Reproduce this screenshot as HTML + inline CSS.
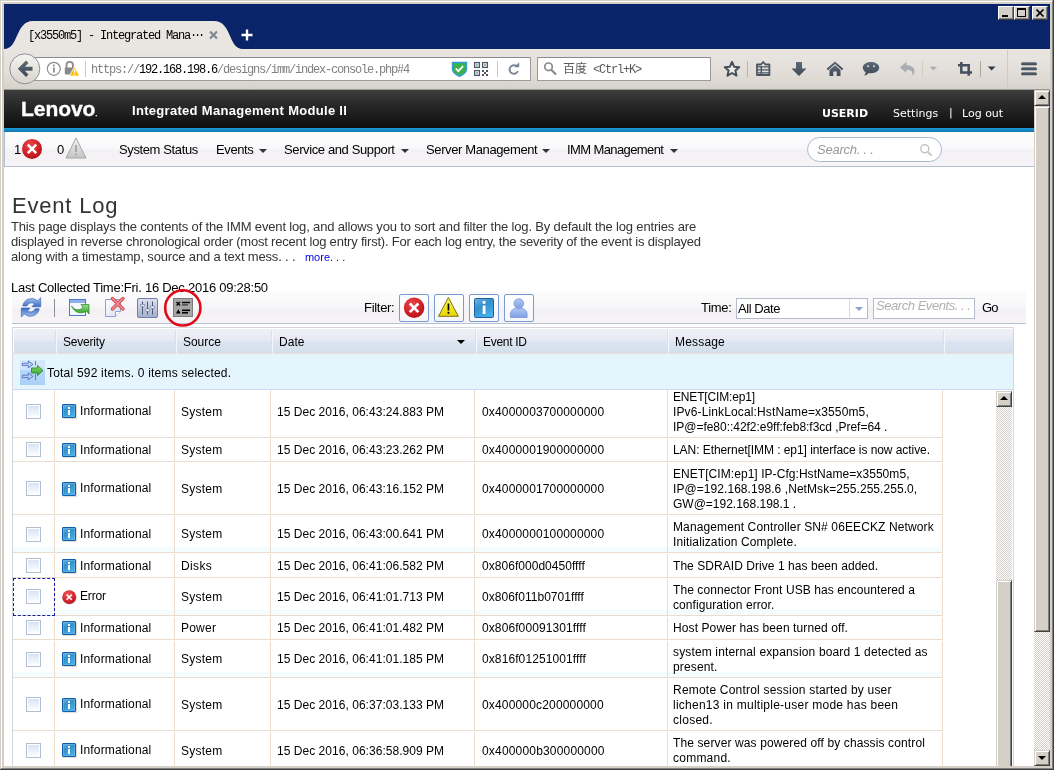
<!DOCTYPE html>
<html><head><meta charset="utf-8"><title>[x3550m5] - Integrated Management Module II</title>
<style>
*{box-sizing:border-box;margin:0;padding:0}
html,body{width:1054px;height:770px;overflow:hidden;background:#d4d0c8}
body{position:relative;font-family:"Liberation Sans",sans-serif;font-size:12px;color:#000}
.abs{position:absolute}
/* window frame */
#frame-w1{left:1px;top:1px;width:1052px;height:768px;border:1px solid #fff;border-right-color:#808080;border-bottom-color:#808080}
#frame-out{left:0;top:0;width:1054px;height:770px;border:1px solid #d4d0c8;border-right-color:#404040;border-bottom-color:#404040}
#title{left:4px;top:4px;width:1046px;height:45px;background:#0a246a}
.wbtn{top:6px;width:16px;height:14px;background:#d4d0c8;border:1px solid #fff;border-right-color:#404040;border-bottom-color:#404040;box-shadow:inset -1px -1px 0 #808080}
#toolbar{left:4px;top:49px;width:1046px;height:40px;background:linear-gradient(#e9e6e2 0%,#e5e1dd 35%,#e2ddd8 60%,#d7d3cc 100%)}
.mono{font-family:"Liberation Mono","Noto Sans CJK SC",monospace;font-size:12px;letter-spacing:-1.2px;white-space:nowrap}
#urlbar{left:32px;top:57px;width:499px;height:24px;background:#fff;border:1px solid #9a9a9a;border-top-color:#8a8a8a}
#searchbar{left:537px;top:57px;width:174px;height:24px;background:#fff;border:1px solid #9a9a9a;border-top-color:#8a8a8a}
/* page */
#page{left:4px;top:89px;width:1030px;height:677px;background:#fff;overflow:hidden;border-top:0}
#hdr{left:0;top:1px;width:1030px;height:38px;background:linear-gradient(#3d3d3d 0%,#262626 45%,#0e0e0e 100%)}
#blue{left:0;top:39px;width:1030px;height:4px;background:linear-gradient(#1d9bdb,#1374ab)}
#nav{left:0;top:43px;width:1030px;height:35px;background:linear-gradient(#fdfcfd 0%,#f9f8fa 45%,#f3f1f4 55%,#f6f4f7 100%);border:1px solid #b4c0d0;border-top:none;border-right:none}
.tah{font-family:"Liberation Sans",sans-serif;font-size:13px;letter-spacing:-0.38px;white-space:nowrap}
.arr{width:0;height:0;border-left:4px solid transparent;border-right:4px solid transparent;border-top:4px solid #333}
.gt{font:12px/15px "Liberation Sans",sans-serif;white-space:nowrap;color:#000}
.ghead{background:linear-gradient(#f0f1f7 0%,#e6e8f3 46%,#dce6f1 50%,#d2deeb 100%)}
.row{left:0;width:930px;border-bottom:1px solid #ecdccc}
.vs{width:1px;background:#ecdccc}
.cb{width:15px;height:15px;border:1px solid #b3bece;background:linear-gradient(#d5e2f3 0%,#eef4fb 60%,#fff 100%);box-shadow:inset 0 0 0 1px #fff}
.sbtrack{background-color:#fff;background-image:linear-gradient(45deg,#d4d0c8 25%,transparent 25%,transparent 75%,#d4d0c8 75%),linear-gradient(45deg,#d4d0c8 25%,transparent 25%,transparent 75%,#d4d0c8 75%);background-size:2px 2px;background-position:0 0,1px 1px}
.sbbtn{background:#d4d0c8;border:1px solid #d4d0c8;border-right-color:#404040;border-bottom-color:#404040;box-shadow:inset 1px 1px 0 #fff,inset -1px -1px 0 #808080}
.fbtn{top:1px;width:30px;height:28px;border:1px solid #7b9bd3;border-radius:2px;background:linear-gradient(#fff,#f6f5f9)}
.gt,.tah,.mono,#hdr div,#evt{will-change:transform}
</style></head><body>
<svg width="0" height="0" style="position:absolute"><defs>
<linearGradient id="ginfo" x1="0" y1="0" x2="0.600" y2="1"><stop offset="0" stop-color="#79b6dc"/><stop offset="0.450" stop-color="#3391cb"/><stop offset="1" stop-color="#46aee8"/></linearGradient>
<linearGradient id="ggrn2" x1="0" y1="0" x2="0" y2="1"><stop offset="0" stop-color="#8fdc78"/><stop offset="1" stop-color="#2f9e2a"/></linearGradient>
<radialGradient id="gerr2" cx="0.4" cy="0.3" r="0.8"><stop offset="0" stop-color="#ee5a5e"/><stop offset="0.6" stop-color="#d3252b"/><stop offset="1" stop-color="#b01218"/></radialGradient>
</defs></svg>
<div class="abs" style="left:1px;top:1px;width:1051px;height:1px;background:#fff"></div>
<div class="abs" style="left:1px;top:1px;width:1px;height:767px;background:#fff"></div>
<div class="abs" style="left:1052px;top:1px;width:1px;height:768px;background:#808080"></div>
<div class="abs" style="left:1px;top:768px;width:1052px;height:1px;background:#808080"></div>
<div class="abs" style="left:1053px;top:0;width:1px;height:770px;background:#404040"></div>
<div class="abs" style="left:0;top:769px;width:1054px;height:1px;background:#404040"></div>
<div class="abs" id="title"></div>
<div class="abs" id="toolbar"></div>
<div class="abs" id="urlbar"></div>
<div class="abs" id="searchbar"></div>

<svg class="abs" id="chrome" style="left:0;top:0" width="1054" height="90" viewBox="0 0 1054 90">
  <defs>
    <linearGradient id="gback" x1="0" y1="0" x2="0" y2="1"><stop offset="0" stop-color="#f6f4f1"/><stop offset="1" stop-color="#d9d5cd"/></linearGradient>
    <linearGradient id="gic" x1="0" y1="0" x2="0" y2="1"><stop offset="0" stop-color="#5c6977"/><stop offset="1" stop-color="#3f4a57"/></linearGradient>
  </defs>
  <!-- tab -->
  <path d="M4,49 C19,49 15,21 33,21 L214,21 C232,21 228,49 243,49 Z" fill="#e9e6e2"/>
  <!-- tab close -->
  <path d="M210,31.5 l7,7 M217,31.5 l-7,7" stroke="#7f8790" stroke-width="2.2" fill="none"/>
  <!-- new tab plus -->
  <path d="M241.5,35 h11 M247,29.5 v11" stroke="#fff" stroke-width="2.4" fill="none"/>
  <!-- back button -->
  <circle cx="24.8" cy="68.8" r="15" fill="url(#gback)" stroke="#8b9097" stroke-width="1"/>
  <path d="M32.5,66.800 H24.800 L28.500,63.100 L26,60.600 L17.800,68.800 L26,77 L28.500,74.500 L24.800,70.800 H32.500 Z" fill="url(#gic)"/>
  <!-- info -->
  <circle cx="53.8" cy="68.8" r="6.5" fill="none" stroke="#8c8c8c" stroke-width="1.2"/>
  <rect x="53" y="67.5" width="1.8" height="5" fill="#8c8c8c"/><rect x="53" y="64.6" width="1.8" height="1.8" fill="#8c8c8c"/>
  <!-- lock -->
  <path d="M66.5,68 v-3 a3.2,3.2 0 0 1 6.4,0 v3" fill="none" stroke="#8a8a8a" stroke-width="1.8"/>
  <rect x="64.8" y="67.5" width="9.6" height="7" rx="1" fill="#8a8a8a"/>
  <path d="M74.5,66.5 L79.6,76 H69.4 Z" fill="#ffbf00" stroke="#fff" stroke-width="0.8"/>
  <rect x="74" y="69.5" width="1.2" height="3.2" fill="#fff"/><rect x="74" y="73.6" width="1.2" height="1.2" fill="#fff"/>
  <!-- url sep -->
  <rect x="85" y="61" width="1" height="16" fill="#c9c9c9"/>
  <!-- shield -->
  <path d="M452.500,62.500 h14 v6.500 c0,3.500 -4,6 -7,7.300 c-3,-1.300 -7,-3.800 -7,-7.300 z" fill="#3cb34a" stroke="#2f9bd8" stroke-width="1.4"/>
  <path d="M455.8,68.500 l2.500,2.700 l4.800,-5" fill="none" stroke="#fff" stroke-width="1.800"/>
  <!-- qr -->
  <g fill="none" stroke="#4c5866" stroke-width="1.300">
    <rect x="474.6" y="62.6" width="4.800" height="4.800"/><rect x="482.6" y="62.6" width="4.800" height="4.800"/><rect x="474.6" y="70.6" width="4.800" height="4.800"/>
  </g>
  <g fill="#4c5866"><rect x="476.300" y="64.300" width="1.400" height="1.400"/><rect x="484.300" y="64.300" width="1.400" height="1.400"/><rect x="476.300" y="72.300" width="1.400" height="1.400"/>
    <rect x="482" y="70" width="2" height="2"/><rect x="486" y="70" width="2" height="2"/><rect x="484" y="72" width="2" height="2"/><rect x="482" y="74" width="2" height="2"/><rect x="486" y="74" width="2" height="2"/></g>
  <rect x="497" y="61" width="1" height="16" fill="#c9c9c9"/>
  <!-- reload -->
  <path d="M516.800,66.300 a4.300,4.300 0 1 0 1.100,4.700" fill="none" stroke="#7b8693" stroke-width="1.900"/>
  <path d="M514.200,67.300 h5 v-5 z" fill="#7b8693"/>
  <!-- search magnifier -->
  <circle cx="548.500" cy="66.800" r="3.800" fill="none" stroke="#8a8a8a" stroke-width="1.700"/>
  <path d="M551.300,69.800 l4.700,4.700" stroke="#8a8a8a" stroke-width="2.200" fill="none"/>
  <!-- star -->
  <path d="M732,62 l2.100,4.700 l5.100,0.500 l-3.800,3.400 l1.100,5 l-4.500,-2.600 l-4.500,2.600 l1.100,-5 l-3.800,-3.400 l5.100,-0.500 z" fill="#eeebe7" stroke="#414d5a" stroke-width="2" stroke-linejoin="round"/>
  <rect x="747" y="61" width="1" height="16" fill="#b9b6b0"/>
  <!-- clipboard -->
  <path d="M757,64.500 h4 l2.200,-2.500 l2.200,2.500 h4 v10.500 h-12.400 z" fill="none" stroke="#4a5663" stroke-width="1.800" stroke-linejoin="round"/>
  <path d="M758,66.900 h11 M758,69.900 h11 M758,72.900 h11 M761.300,66 v8.500" stroke="#4a5663" stroke-width="1.400" fill="none"/>
  <!-- download -->
  <path d="M796,62 h6 v6.500 h4.500 l-7.500,7.500 l-7.500,-7.500 h4.500 z" fill="url(#gic)"/>
  <!-- home -->
  <path d="M835,61.500 l8.300,7.300 l-1.300,1.400 l-7,-6.200 l-7,6.200 l-1.300,-1.400 z" fill="url(#gic)"/>
  <path d="M829.500,70 l5.500,-4.800 l5.500,4.800 v6 h-3.800 v-4.500 h-3.400 v4.500 h-3.800 z" fill="url(#gic)"/>
  <!-- chat -->
  <path d="M871,62 c5,0 8.200,2.500 8.200,5.600 c0,3.100 -3.200,5.600 -8.200,5.600 c-0.800,0 -1.600,-0.100 -2.300,-0.200 c-1.200,1.400 -2.700,2.200 -4.500,2.400 c0.900,-0.900 1.400,-2 1.400,-3.300 c-1.800,-1 -2.800,-2.600 -2.800,-4.500 c0,-3.100 3.200,-5.600 8.200,-5.600 z" fill="url(#gic)"/>
  <circle cx="868" cy="66.300" r="1" fill="#d9dde2"/><circle cx="874" cy="66.300" r="1" fill="#d9dde2"/>
  <!-- undo (disabled) -->
  <path d="M906.500,61.800 v3.400 c5,0 8,2.500 8,6 c0,2 -1,3.600 -2.800,4.600 c0.600,-0.900 0.800,-1.700 0.800,-2.600 c0,-2.200 -2,-3.500 -6,-3.500 v3.400 l-6.500,-5.600 z" fill="#a9adb1"/>
  <rect x="922" y="61" width="1" height="16" fill="#d2cec7"/>
  <path d="M929.700,66.800 h7.400 l-3.700,3.600 z" fill="#a9adb1"/>
  <!-- crop -->
  <path d="M961.300,62 v10.500 h10.700 M958,65.300 h10.700 v10.500" fill="none" stroke="#445060" stroke-width="2.500"/>
  <rect x="980" y="61" width="1" height="16" fill="#a9a6a0"/>
  <path d="M987.700,66.600 h7.800 l-3.900,3.900 z" fill="#2f3a47"/>
  <rect x="1007" y="50" width="1" height="38" fill="#cfcbc4"/>
  <!-- hamburger -->
  <g fill="url(#gic)"><rect x="1021" y="62.200" width="16" height="3" rx="1.500"/><rect x="1021" y="67.200" width="16" height="3" rx="1.500"/><rect x="1021" y="72.200" width="16" height="3" rx="1.500"/></g>
</svg>
<div class="abs wbtn" style="left:998px"><div class="abs" style="left:3px;top:8px;width:6px;height:2px;background:#000"></div></div>
<div class="abs wbtn" style="left:1014px"><div class="abs" style="left:2px;top:1px;width:9px;height:9px;border:1px solid #000;border-top-width:2px"></div></div>
<div class="abs wbtn" style="left:1032px"><svg class="abs" style="left:3px;top:2px" width="9" height="8" viewBox="0 0 9 8"><path d="M0.500,0.500 L7.500,7.500 M7.500,0.500 L0.500,7.500" stroke="#000" stroke-width="1.600"/></svg></div>
<div class="abs mono" style="left:28px;top:29px;color:#000;line-height:14px">[x3550m5] - Integrated Mana<span style="letter-spacing:-3.200px">···</span></div>
<div class="abs mono" style="left:90.500px;top:63px;line-height:14px;color:#808080">https://<span style="color:#000">192.168.198.6</span>/designs/imm/index-console.php#4</div>
<div class="abs mono" style="left:563px;top:63px;line-height:14px;color:#5a5a5a"><span style="letter-spacing:0">百度</span> &lt;Ctrl+K&gt;</div>
<div class="abs" id="page">
  <div class="abs" id="hdr">
    <div class="abs" style="left:17px;top:7px;font:bold 21px/24px 'Liberation Sans',sans-serif;letter-spacing:-0.050px;-webkit-text-stroke:0.350px #fff;color:#fff">Lenovo<span style="font-size:6px;letter-spacing:0">.</span></div>
    <div class="abs" style="left:128px;top:13px;font:bold 13px/16px 'Liberation Sans',sans-serif;letter-spacing:0.3px;color:#fff;white-space:nowrap">Integrated Management Module II</div>
    <div class="abs" style="left:818px;top:17px;font:bold 11px/14px 'DejaVu Sans',sans-serif;color:#fff">USERID</div>
    <div class="abs" style="left:889px;top:17px;font:11px/14px 'DejaVu Sans',sans-serif;color:#fff;white-space:nowrap">Settings</div>
    <div class="abs" style="left:945px;top:16px;font:11px/14px 'DejaVu Sans',sans-serif;color:#fff">|</div>
    <div class="abs" style="left:958px;top:17px;font:11px/14px 'DejaVu Sans',sans-serif;color:#fff;white-space:nowrap">Log out</div>
  </div>
  <div class="abs" id="blue"></div>
  <div class="abs" id="nav">
    <div class="abs tah" style="left:9px;top:10px;line-height:16px">1</div>
    <svg class="abs" style="left:15px;top:4px" width="24" height="24" viewBox="0 0 24 24">
      <defs><radialGradient id="gerr" cx="0.4" cy="0.3" r="0.8"><stop offset="0" stop-color="#e8474b"/><stop offset="0.6" stop-color="#d11f25"/><stop offset="1" stop-color="#a80d12"/></radialGradient></defs>
      <circle cx="12" cy="12.900" r="10" fill="url(#gerr)"/>
      <path d="M7.800,8.700 l8.400,8.400 M16.200,8.700 l-8.400,8.400" stroke="#fff" stroke-width="2.600" fill="none"/>
    </svg>
    <div class="abs tah" style="left:52px;top:10px;line-height:16px">0</div>
    <svg class="abs" style="left:59px;top:4px" width="24" height="24" viewBox="0 0 24 24">
      <defs><linearGradient id="gwarn" x1="0" y1="0" x2="0" y2="1"><stop offset="0" stop-color="#f4f4f4"/><stop offset="1" stop-color="#c4c4c4"/></linearGradient></defs>
      <path d="M12,2 L22,22 H2 Z" fill="url(#gwarn)" stroke="#a4a4a4" stroke-width="1" stroke-linejoin="round"/>
      <rect x="11.200" y="9" width="1.600" height="7" fill="#9c9c9c"/><rect x="11.200" y="17.500" width="1.600" height="1.800" fill="#9c9c9c"/>
    </svg>
    <div class="abs tah" style="left:114px;top:10px;line-height:16px">System Status</div>
    <div class="abs tah" style="left:211px;top:10px;line-height:16px">Events</div>
    <div class="abs arr" style="left:254px;top:17px"></div>
    <div class="abs tah" style="left:279px;top:10px;line-height:16px">Service and Support</div>
    <div class="abs arr" style="left:396px;top:17px"></div>
    <div class="abs tah" style="left:421px;top:10px;line-height:16px">Server Management</div>
    <div class="abs arr" style="left:537px;top:17px"></div>
    <div class="abs tah" style="left:562px;top:10px;line-height:16px;letter-spacing:-0.600px">IMM Management</div>
    <div class="abs arr" style="left:665px;top:17px"></div>
    <div class="abs" style="left:802px;top:5px;width:135px;height:25px;border:1px solid #a9b9d1;border-radius:13px;background:#fff"></div>
    <div class="abs tah" style="left:812px;top:10px;line-height:16px;font-style:italic;color:#999;letter-spacing:-0.250px">Search. . .</div>
    <svg class="abs" style="left:914px;top:11px" width="14" height="14" viewBox="0 0 14 14"><circle cx="5.800" cy="5.800" r="4" fill="none" stroke="#c4c4c4" stroke-width="1.500"/><path d="M8.800,8.800 l3.800,3.800" stroke="#c4c4c4" stroke-width="1.800"/></svg>
  </div>

  <div class="abs" id="evt" style="left:8px;top:103px;font:22px/28px 'Liberation Sans',sans-serif;letter-spacing:0.800px;color:#333;white-space:nowrap">Event Log</div>
  <div class="abs tah" style="left:7px;top:130px;line-height:15px;letter-spacing:-0.160px;color:#333">This page displays the contents of the IMM event log, and allows you to sort and filter the log. By default the log entries are</div>
  <div class="abs tah" style="left:7px;top:145px;line-height:15px;letter-spacing:-0.200px;color:#333">displayed in reverse chronological order (most recent log entry first). For each log entry, the severity of the event is displayed</div>
  <div class="abs tah" style="left:7px;top:160px;line-height:15px;letter-spacing:-0.160px;color:#333">along with a timestamp, source and a text mess. . . <span style="font-size:11px;color:#0000ee;margin-left:6px;letter-spacing:0">more. . .</span></div>
  <div class="abs tah" style="left:7px;top:191px;line-height:16px;letter-spacing:-0.250px;color:#000">Last Collected Time:Fri, 16 Dec 2016 09:28:50</div>
  <div class="abs" id="tb" style="left:8px;top:203px;width:1014px;height:32px;background:linear-gradient(#fdfcfd 0%,#f8f7f9 40%,#f3f1f4 60%,#f6f4f7 100%);border-bottom:1px solid #b6c2d2"></div>
  <div class="abs" id="tbicons" style="left:8px;top:204px;width:1014px;height:30px">
<svg class="abs" style="left:0;top:-8px" width="300" height="46" viewBox="8 -8 300 46">
  <defs>
    <linearGradient id="gref" x1="0" y1="0" x2="0" y2="1"><stop offset="0" stop-color="#a4c6f2"/><stop offset="1" stop-color="#3a6cc0"/></linearGradient>
    <linearGradient id="ggrn" x1="0" y1="0" x2="0" y2="1"><stop offset="0" stop-color="#9be08a"/><stop offset="1" stop-color="#2f9e2a"/></linearGradient>
    <linearGradient id="gset" x1="0" y1="0" x2="0" y2="1"><stop offset="0" stop-color="#dde2f0"/><stop offset="1" stop-color="#a3afcd"/></linearGradient>
    <linearGradient id="gpg" x1="0" y1="0" x2="1" y2="1"><stop offset="0" stop-color="#ffffff"/><stop offset="1" stop-color="#d4def4"/></linearGradient>
  </defs>
  <!-- coordinates here are page-absolute minus (4,89+204=293): x_abs-4, y_abs-293 -->
  <!-- refresh: abs x 21..41, y 297..317 => local x 17..37, y 4..24 -->
  <path d="M18.800,13 A8.900,8.900 0 0 1 33.500,7.700 L36.700,4.800 V13.800 H27.800 L30.500,11 A4.800,4.800 0 0 0 22.900,13 Z" fill="url(#gref)" stroke="#2d5cac" stroke-width="0.600"/>
  <path d="M18.800,13 A8.900,8.900 0 0 1 33.500,7.700 L36.700,4.800 V13.800 H27.800 L30.500,11 A4.800,4.800 0 0 0 22.900,13 Z" fill="url(#gref)" stroke="#2d5cac" stroke-width="0.600" transform="rotate(180 27 14.400)"/>
  <!-- separator abs x 54 y 299..317 -->
  <rect x="50" y="6" width="1" height="18" fill="#8f8f8f"/>
  <!-- export: window abs x 69..86, y 299..316 -> local 65..82, 6..23 -->
  <rect x="65.500" y="6.500" width="16" height="16" fill="#f4f8ff" stroke="#4a7ad0" stroke-width="1"/>
  <rect x="66" y="7" width="15" height="3" fill="#8db0ee"/>
  <path d="M67.500,13 c3,4.500 8,5 11.500,1.500 l-2,-3 h8 v9.500 l-2.500,-3 c-5,3.500 -12,2 -15,-5 z" fill="url(#ggrn)" stroke="#1f8a1c" stroke-width="0.700"/>
  <!-- delete page abs x 105..121, y 299..317 -> local 101..117, 6..24 -->
  <path d="M101.500,6.500 h15 v12 l-5,5 h-10 z" fill="url(#gpg)" stroke="#8ea0cc" stroke-width="1"/>
  <path d="M116.500,18.500 h-5 v5" fill="#fff" stroke="#8ea0cc" stroke-width="1"/>
  <path d="M108.500,5.500 l10.500,10.500 M119,5.500 l-10.500,10.500" stroke="#dc4a50" stroke-width="3.400" stroke-linecap="round"/><path d="M108.500,5.500 l10.500,10.500 M119,5.500 l-10.500,10.500" stroke="#f0999c" stroke-width="1.200" stroke-linecap="round"/>
  <!-- settings abs x 137..157, y 298..317 -> local 133..153, 5..24 -->
  <rect x="133.500" y="5.500" width="20" height="19" rx="1.500" fill="url(#gset)" stroke="#6f7ea6" stroke-width="1"/>
  <path d="M138.500,8.500 v13 M143.500,8.500 v13 M148.500,8.500 v13" stroke="#4c5878" stroke-width="1"/>
  <rect x="136.800" y="11.300" width="3.400" height="2.400" fill="#eef2fa" stroke="#56638c" stroke-width="0.500"/>
  <rect x="141.800" y="16" width="3.400" height="2.400" fill="#eef2fa" stroke="#56638c" stroke-width="0.500"/>
  <rect x="146.800" y="13" width="3.400" height="2.400" fill="#eef2fa" stroke="#56638c" stroke-width="0.500"/>
  <!-- list icon abs x 173..193, y 298..316 -> local 169..189, 5..23 -->
  <rect x="169.500" y="5.500" width="19" height="18" fill="#a6a6a6" stroke="#7d7d7d" stroke-width="1"/>
  <path d="M172.500,9 l3.500,3.500 M176,9 l-3.500,3.500" stroke="#000" stroke-width="1.300"/>
  <rect x="178" y="8.800" width="8" height="1.400" fill="#000"/><rect x="178" y="11.300" width="6" height="1.200" fill="#333"/>
  <path d="M172,20.500 l2.300,-4.200 l2.300,4.200 z" fill="#000"/>
  <rect x="178" y="16.500" width="8" height="1.600" fill="#000"/><rect x="178" y="19" width="6" height="1.600" fill="#000"/>
  <!-- red circle center abs (182.8,307.9) -> local (178.800,14.900) r=17.400 -->
  <circle cx="178.800" cy="14.900" r="17.600" fill="none" stroke="#e30a17" stroke-width="2.600"/>
</svg>
<div class="abs tah" style="left:352px;top:7px;line-height:16px;letter-spacing:-0.300px">Filter:</div>
<div class="abs fbtn" style="left:387px"></div><div class="abs fbtn" style="left:422px"></div><div class="abs fbtn" style="left:457px"></div><div class="abs fbtn" style="left:492px"></div>
<svg class="abs" style="left:387px;top:1px" width="140" height="28" viewBox="0 0 140 28">
  <defs>
    <linearGradient id="gyel" x1="0" y1="0" x2="0" y2="1"><stop offset="0" stop-color="#fffb5a"/><stop offset="1" stop-color="#e9d400"/></linearGradient>
    <linearGradient id="gusr" x1="0" y1="0" x2="0" y2="1"><stop offset="0" stop-color="#b4c8f4"/><stop offset="1" stop-color="#7f9fe4"/></linearGradient>
  </defs>
  <circle cx="15.100" cy="13.800" r="10.200" fill="url(#gerr)"/>
  <path d="M10.800,9.500 l8.600,8.600 M19.400,9.500 l-8.600,8.600" stroke="#fff" stroke-width="2.600" fill="none"/>
  <path d="M49.400,3.500 L59.300,22.300 H39.500 Z" fill="url(#gyel)" stroke="#77741a" stroke-width="1" stroke-linejoin="round"/>
  <rect x="48.600" y="9.500" width="1.700" height="7" fill="#000"/><rect x="48.600" y="17.800" width="1.700" height="2" fill="#000"/>
  <rect x="75.500" y="4.500" width="19" height="19" rx="1" fill="url(#ginfo)" stroke="#1b5fa6"/>
  <rect x="83.700" y="11.500" width="2.800" height="8.500" fill="#fff"/><rect x="83.700" y="7" width="2.800" height="2.800" fill="#fff"/>
  <circle cx="119.800" cy="9.500" r="4.800" fill="url(#gusr)" stroke="#6f8fdc" stroke-width="0.700"/>
  <path d="M111.500,23.500 v-3.500 c0,-3.500 3,-5.500 5.500,-6 c1.800,1.200 3.800,1.200 5.600,0 c2.500,0.500 5.500,2.500 5.500,6 v3.500 z" fill="url(#gusr)" stroke="#6f8fdc" stroke-width="0.700"/>
</svg>
<div class="abs tah" style="left:689px;top:7px;line-height:16px;letter-spacing:-0.300px">Time:</div>
<div class="abs" style="left:724px;top:5px;width:132px;height:21px;border:1px solid #b2bccd;background:#fff"></div>
<div class="abs" style="left:837px;top:6px;width:1px;height:19px;background:#d5dbe6"></div>
<div class="abs" style="left:843px;top:14px;width:0;height:0;border-left:4px solid transparent;border-right:4px solid transparent;border-top:4px solid #8aa2cc"></div>
<div class="abs tah" style="left:726px;top:8px;line-height:16px;letter-spacing:-0.450px">All Date</div>
<div class="abs" style="left:861px;top:5px;width:102px;height:21px;border:1px solid #b2bccd;background:#fff;overflow:hidden"><div class="abs tah" style="left:2px;top:-1px;line-height:16px;font-style:italic;color:#b0b0b0;letter-spacing:-0.450px">Search Events. . .</div></div>
<div class="abs tah" style="left:970px;top:7px;line-height:16px;letter-spacing:-0.800px">Go</div>
</div><!--/tb-->
  <div class="abs" id="grid" style="left:8px;top:238px;width:1002px;height:440px;border:1px solid #d5d5dd;border-bottom:none;background:#fff;overflow:hidden">
<div class="abs ghead" style="left:1px;top:1px;width:999px;height:25px"></div>
<div class="abs" style="left:42px;top:2px;width:1px;height:24px;background:#eddccb"></div>
<div class="abs" style="left:43px;top:2px;width:1px;height:24px;background:#f3f6fa"></div>
<div class="abs" style="left:162px;top:2px;width:1px;height:24px;background:#eddccb"></div>
<div class="abs" style="left:163px;top:2px;width:1px;height:24px;background:#f3f6fa"></div>
<div class="abs" style="left:258px;top:2px;width:1px;height:24px;background:#eddccb"></div>
<div class="abs" style="left:259px;top:2px;width:1px;height:24px;background:#f3f6fa"></div>
<div class="abs" style="left:462px;top:2px;width:1px;height:24px;background:#eddccb"></div>
<div class="abs" style="left:463px;top:2px;width:1px;height:24px;background:#f3f6fa"></div>
<div class="abs" style="left:654px;top:2px;width:1px;height:24px;background:#eddccb"></div>
<div class="abs" style="left:655px;top:2px;width:1px;height:24px;background:#f3f6fa"></div>
<div class="abs" style="left:930px;top:2px;width:1px;height:24px;background:#eddccb"></div>
<div class="abs" style="left:931px;top:2px;width:1px;height:24px;background:#f3f6fa"></div>
<div class="abs gt" style="left:50.3px;top:7px;letter-spacing:-0.195px">Severity</div>
<div class="abs gt" style="left:170.3px;top:7px;letter-spacing:-0.042px">Source</div>
<div class="abs gt" style="left:266px;top:7px;letter-spacing:0.040px">Date</div>
<div class="abs gt" style="left:470.2px;top:7px;letter-spacing:-0.298px">Event ID</div>
<div class="abs gt" style="left:662px;top:7px;letter-spacing:0.184px">Message</div>
<div class="abs" style="left:444px;top:12px;width:0;height:0;border-left:4px solid transparent;border-right:4px solid transparent;border-top:4px solid #000"></div>
<div class="abs" style="left:0;top:25px;width:1000px;height:37px;background:#e5f5fe;border-bottom:1px solid #c9dbf3;border-top:1px solid #efdfcf"></div>
<div class="abs" style="left:7px;top:32px;width:25px;height:25px;background:linear-gradient(#d6e9fc 0%,#cde4fb 38%,#b6d7f9 42%,#aad1f8 100%)"></div>
<svg class="abs" style="left:7px;top:32px" width="25" height="25" viewBox="0 0 25 25">
<path d="M2.300,3.200 h6 v-2.300 l4.700,3.500 l-4.700,3.500 v-2.300 h-6 z" fill="#b9cdf2" stroke="#4566b8" stroke-width="0.800" stroke-linejoin="round"/>
<path d="M2.300,15.200 h6 v-2.300 l4.700,3.500 l-4.700,3.500 v-2.300 h-6 z" fill="#b9cdf2" stroke="#4566b8" stroke-width="0.800" stroke-linejoin="round"/>
<path d="M15.500,1 v4.500 M15.500,14 v6" stroke="#5878c4" stroke-width="1"/>
<path d="M11.500,8 h6 v-2.600 l5.500,5.100 l-5.500,5.100 v-2.600 h-6 z" fill="url(#ggrn2)" stroke="#2f8a22" stroke-width="0.900" stroke-linejoin="round"/>
</svg>
<div class="abs gt" style="left:34.3px;top:38px;letter-spacing:0.000px;letter-spacing:0.200px">Total 592 items. 0 items selected.</div>
<div class="abs" id="gbody" style="left:0;top:62px;width:1000px;height:380px;overflow:hidden">
<div class="abs row" style="top:-5px;height:53px">
<div class="abs vs" style="left:41px;top:1px;height:51px"></div>
<div class="abs vs" style="left:161px;top:1px;height:51px"></div>
<div class="abs vs" style="left:257px;top:1px;height:51px"></div>
<div class="abs vs" style="left:461px;top:1px;height:51px"></div>
<div class="abs vs" style="left:654px;top:1px;height:51px"></div>
<div class="abs vs" style="left:929px;top:1px;height:51px"></div>
<div class="abs cb" style="left:13px;top:19px"></div>
<svg class="abs ic" width="15" height="15" viewBox="0 0 15 15" style="left:49px;top:19px"><rect x="1" y="1" width="14" height="14" fill="#d9d2cc" opacity="0.700"/><rect x="0.500" y="0.500" width="13" height="13" rx="0.500" fill="url(#ginfo)" stroke="#0f5ea9"/><rect x="1.500" y="1.500" width="11" height="11" fill="none" stroke="#6fb6e4" stroke-opacity="0.600"/><rect x="6" y="6" width="2" height="5" fill="#fff"/><rect x="6" y="3" width="2" height="2" fill="#fff"/></svg>
<div class="abs gt" style="left:67.2px;top:19px;letter-spacing:0.154px">Informational</div>
<div class="abs gt" style="left:168.3px;top:20px;letter-spacing:0.234px">System</div>
<div class="abs gt" style="left:264.3px;top:20px;letter-spacing:0.035px">15 Dec 2016, 06:43:24.883 PM</div>
<div class="abs gt" style="left:468.8px;top:20px;letter-spacing:0.156px">0x4000003700000000</div>
<div class="abs gt" style="left:660.4px;top:5px;letter-spacing:-0.163px">ENET[CIM:ep1]</div>
<div class="abs gt" style="left:660.4px;top:20px;letter-spacing:0.132px">IPv6-LinkLocal:HstName=x3550m5,</div>
<div class="abs gt" style="left:660.4px;top:35px;letter-spacing:-0.029px">IP@=fe80::42f2:e9ff:feb8:f3cd ,Pref=64 .</div>
</div>
<div class="abs row" style="top:48px;height:24px">
<div class="abs vs" style="left:41px;top:1px;height:22px"></div>
<div class="abs vs" style="left:161px;top:1px;height:22px"></div>
<div class="abs vs" style="left:257px;top:1px;height:22px"></div>
<div class="abs vs" style="left:461px;top:1px;height:22px"></div>
<div class="abs vs" style="left:654px;top:1px;height:22px"></div>
<div class="abs vs" style="left:929px;top:1px;height:22px"></div>
<div class="abs cb" style="left:13px;top:4px"></div>
<svg class="abs ic" width="15" height="15" viewBox="0 0 15 15" style="left:49px;top:5px"><rect x="1" y="1" width="14" height="14" fill="#d9d2cc" opacity="0.700"/><rect x="0.500" y="0.500" width="13" height="13" rx="0.500" fill="url(#ginfo)" stroke="#0f5ea9"/><rect x="1.500" y="1.500" width="11" height="11" fill="none" stroke="#6fb6e4" stroke-opacity="0.600"/><rect x="6" y="6" width="2" height="5" fill="#fff"/><rect x="6" y="3" width="2" height="2" fill="#fff"/></svg>
<div class="abs gt" style="left:67.2px;top:5px;letter-spacing:0.154px">Informational</div>
<div class="abs gt" style="left:168.3px;top:5px;letter-spacing:0.234px">System</div>
<div class="abs gt" style="left:264.3px;top:5px;letter-spacing:0.035px">15 Dec 2016, 06:43:23.262 PM</div>
<div class="abs gt" style="left:468.8px;top:5px;letter-spacing:0.156px">0x4000001900000000</div>
<div class="abs gt" style="left:660.4px;top:5px;letter-spacing:-0.064px">LAN: Ethernet[IMM : ep1] interface is now active.</div>
</div>
<div class="abs row" style="top:72px;height:53px">
<div class="abs vs" style="left:41px;top:1px;height:51px"></div>
<div class="abs vs" style="left:161px;top:1px;height:51px"></div>
<div class="abs vs" style="left:257px;top:1px;height:51px"></div>
<div class="abs vs" style="left:461px;top:1px;height:51px"></div>
<div class="abs vs" style="left:654px;top:1px;height:51px"></div>
<div class="abs vs" style="left:929px;top:1px;height:51px"></div>
<div class="abs cb" style="left:13px;top:19px"></div>
<svg class="abs ic" width="15" height="15" viewBox="0 0 15 15" style="left:49px;top:20px"><rect x="1" y="1" width="14" height="14" fill="#d9d2cc" opacity="0.700"/><rect x="0.500" y="0.500" width="13" height="13" rx="0.500" fill="url(#ginfo)" stroke="#0f5ea9"/><rect x="1.500" y="1.500" width="11" height="11" fill="none" stroke="#6fb6e4" stroke-opacity="0.600"/><rect x="6" y="6" width="2" height="5" fill="#fff"/><rect x="6" y="3" width="2" height="2" fill="#fff"/></svg>
<div class="abs gt" style="left:67.2px;top:19px;letter-spacing:0.154px">Informational</div>
<div class="abs gt" style="left:168.3px;top:20px;letter-spacing:0.234px">System</div>
<div class="abs gt" style="left:264.3px;top:20px;letter-spacing:0.035px">15 Dec 2016, 06:43:16.152 PM</div>
<div class="abs gt" style="left:468.8px;top:20px;letter-spacing:0.156px">0x4000001700000000</div>
<div class="abs gt" style="left:660.4px;top:5px;letter-spacing:0.057px">ENET[CIM:ep1] IP-Cfg:HstName=x3550m5,</div>
<div class="abs gt" style="left:660.4px;top:20px;letter-spacing:0.064px">IP@=192.168.198.6 ,NetMsk=255.255.255.0,</div>
<div class="abs gt" style="left:660.4px;top:35px;letter-spacing:-0.004px">GW@=192.168.198.1 .</div>
</div>
<div class="abs row" style="top:125px;height:38px">
<div class="abs" style="left:0;top:32px;width:929px;height:5px;background:#f4fcfe"></div>
<div class="abs vs" style="left:41px;top:1px;height:36px"></div>
<div class="abs vs" style="left:161px;top:1px;height:36px"></div>
<div class="abs vs" style="left:257px;top:1px;height:36px"></div>
<div class="abs vs" style="left:461px;top:1px;height:36px"></div>
<div class="abs vs" style="left:654px;top:1px;height:36px"></div>
<div class="abs vs" style="left:929px;top:1px;height:36px"></div>
<div class="abs cb" style="left:13px;top:12px"></div>
<svg class="abs ic" width="15" height="15" viewBox="0 0 15 15" style="left:49px;top:12px"><rect x="1" y="1" width="14" height="14" fill="#d9d2cc" opacity="0.700"/><rect x="0.500" y="0.500" width="13" height="13" rx="0.500" fill="url(#ginfo)" stroke="#0f5ea9"/><rect x="1.500" y="1.500" width="11" height="11" fill="none" stroke="#6fb6e4" stroke-opacity="0.600"/><rect x="6" y="6" width="2" height="5" fill="#fff"/><rect x="6" y="3" width="2" height="2" fill="#fff"/></svg>
<div class="abs gt" style="left:67.2px;top:12px;letter-spacing:0.154px">Informational</div>
<div class="abs gt" style="left:168.3px;top:12px;letter-spacing:0.234px">System</div>
<div class="abs gt" style="left:264.3px;top:12px;letter-spacing:0.035px">15 Dec 2016, 06:43:00.641 PM</div>
<div class="abs gt" style="left:468.8px;top:12px;letter-spacing:0.156px">0x4000000100000000</div>
<div class="abs gt" style="left:660.4px;top:5px;letter-spacing:0.113px">Management Controller SN# 06EECKZ Network</div>
<div class="abs gt" style="left:660.4px;top:20px;letter-spacing:0.130px">Initialization Complete.</div>
</div>
<div class="abs row" style="top:163px;height:25px">
<div class="abs vs" style="left:41px;top:1px;height:23px"></div>
<div class="abs vs" style="left:161px;top:1px;height:23px"></div>
<div class="abs vs" style="left:257px;top:1px;height:23px"></div>
<div class="abs vs" style="left:461px;top:1px;height:23px"></div>
<div class="abs vs" style="left:654px;top:1px;height:23px"></div>
<div class="abs vs" style="left:929px;top:1px;height:23px"></div>
<div class="abs cb" style="left:13px;top:5px"></div>
<svg class="abs ic" width="15" height="15" viewBox="0 0 15 15" style="left:49px;top:6px"><rect x="1" y="1" width="14" height="14" fill="#d9d2cc" opacity="0.700"/><rect x="0.500" y="0.500" width="13" height="13" rx="0.500" fill="url(#ginfo)" stroke="#0f5ea9"/><rect x="1.500" y="1.500" width="11" height="11" fill="none" stroke="#6fb6e4" stroke-opacity="0.600"/><rect x="6" y="6" width="2" height="5" fill="#fff"/><rect x="6" y="3" width="2" height="2" fill="#fff"/></svg>
<div class="abs gt" style="left:67.2px;top:6px;letter-spacing:0.154px">Informational</div>
<div class="abs gt" style="left:168.3px;top:6px;letter-spacing:0.368px">Disks</div>
<div class="abs gt" style="left:264.3px;top:6px;letter-spacing:0.035px">15 Dec 2016, 06:41:06.582 PM</div>
<div class="abs gt" style="left:468.8px;top:6px;letter-spacing:0.039px">0x806f000d0450ffff</div>
<div class="abs gt" style="left:660.4px;top:6px;letter-spacing:0.052px">The SDRAID Drive 1 has been added.</div>
</div>
<div class="abs row" style="top:188px;height:38px">
<div class="abs" style="left:0;top:32px;width:929px;height:5px;background:#f4fcfe"></div>
<div class="abs vs" style="left:41px;top:1px;height:36px"></div>
<div class="abs vs" style="left:161px;top:1px;height:36px"></div>
<div class="abs vs" style="left:257px;top:1px;height:36px"></div>
<div class="abs vs" style="left:461px;top:1px;height:36px"></div>
<div class="abs vs" style="left:654px;top:1px;height:36px"></div>
<div class="abs vs" style="left:929px;top:1px;height:36px"></div>
<div class="abs cb" style="left:13px;top:11px"></div>
<svg class="abs ic" width="15" height="15" viewBox="0 0 15 15" style="left:49px;top:12px"><circle cx="7.500" cy="7.500" r="7.200" fill="#c4c4c4" opacity="0.700"/><circle cx="7.200" cy="7.200" r="6.900" fill="url(#gerr2)"/><path d="M4.600,4.600 l5.200,5.200 M9.800,4.600 l-5.200,5.200" stroke="#fff" stroke-width="1.500" fill="none"/></svg>
<div class="abs gt" style="left:67.2px;top:11px;letter-spacing:-0.149px">Error</div>
<div class="abs gt" style="left:168.3px;top:12px;letter-spacing:0.234px">System</div>
<div class="abs gt" style="left:264.3px;top:12px;letter-spacing:0.035px">15 Dec 2016, 06:41:01.713 PM</div>
<div class="abs gt" style="left:468.8px;top:12px;letter-spacing:0.033px">0x806f011b0701ffff</div>
<div class="abs gt" style="left:660.4px;top:5px;letter-spacing:0.076px">The connector Front USB has encountered a</div>
<div class="abs gt" style="left:660.4px;top:20px;letter-spacing:0.063px">configuration error.</div>
</div>
<div class="abs row" style="top:226px;height:24px">
<div class="abs vs" style="left:41px;top:1px;height:22px"></div>
<div class="abs vs" style="left:161px;top:1px;height:22px"></div>
<div class="abs vs" style="left:257px;top:1px;height:22px"></div>
<div class="abs vs" style="left:461px;top:1px;height:22px"></div>
<div class="abs vs" style="left:654px;top:1px;height:22px"></div>
<div class="abs vs" style="left:929px;top:1px;height:22px"></div>
<div class="abs cb" style="left:13px;top:4px"></div>
<svg class="abs ic" width="15" height="15" viewBox="0 0 15 15" style="left:49px;top:5px"><rect x="1" y="1" width="14" height="14" fill="#d9d2cc" opacity="0.700"/><rect x="0.500" y="0.500" width="13" height="13" rx="0.500" fill="url(#ginfo)" stroke="#0f5ea9"/><rect x="1.500" y="1.500" width="11" height="11" fill="none" stroke="#6fb6e4" stroke-opacity="0.600"/><rect x="6" y="6" width="2" height="5" fill="#fff"/><rect x="6" y="3" width="2" height="2" fill="#fff"/></svg>
<div class="abs gt" style="left:67.2px;top:5px;letter-spacing:0.154px">Informational</div>
<div class="abs gt" style="left:168.3px;top:5px;letter-spacing:0.219px">Power</div>
<div class="abs gt" style="left:264.3px;top:5px;letter-spacing:0.035px">15 Dec 2016, 06:41:01.482 PM</div>
<div class="abs gt" style="left:468.8px;top:5px;letter-spacing:0.097px">0x806f00091301ffff</div>
<div class="abs gt" style="left:660.4px;top:5px;letter-spacing:0.102px">Host Power has been turned off.</div>
</div>
<div class="abs row" style="top:250px;height:38px">
<div class="abs" style="left:0;top:32px;width:929px;height:5px;background:#f4fcfe"></div>
<div class="abs vs" style="left:41px;top:1px;height:36px"></div>
<div class="abs vs" style="left:161px;top:1px;height:36px"></div>
<div class="abs vs" style="left:257px;top:1px;height:36px"></div>
<div class="abs vs" style="left:461px;top:1px;height:36px"></div>
<div class="abs vs" style="left:654px;top:1px;height:36px"></div>
<div class="abs vs" style="left:929px;top:1px;height:36px"></div>
<div class="abs cb" style="left:13px;top:12px"></div>
<svg class="abs ic" width="15" height="15" viewBox="0 0 15 15" style="left:49px;top:12px"><rect x="1" y="1" width="14" height="14" fill="#d9d2cc" opacity="0.700"/><rect x="0.500" y="0.500" width="13" height="13" rx="0.500" fill="url(#ginfo)" stroke="#0f5ea9"/><rect x="1.500" y="1.500" width="11" height="11" fill="none" stroke="#6fb6e4" stroke-opacity="0.600"/><rect x="6" y="6" width="2" height="5" fill="#fff"/><rect x="6" y="3" width="2" height="2" fill="#fff"/></svg>
<div class="abs gt" style="left:67.2px;top:12px;letter-spacing:0.154px">Informational</div>
<div class="abs gt" style="left:168.3px;top:12px;letter-spacing:0.234px">System</div>
<div class="abs gt" style="left:264.3px;top:12px;letter-spacing:0.035px">15 Dec 2016, 06:41:01.185 PM</div>
<div class="abs gt" style="left:468.8px;top:12px;letter-spacing:0.097px">0x816f01251001ffff</div>
<div class="abs gt" style="left:660.4px;top:5px;letter-spacing:0.147px">system internal expansion board 1 detected as</div>
<div class="abs gt" style="left:660.4px;top:20px;letter-spacing:0.139px">present.</div>
</div>
<div class="abs row" style="top:288px;height:53px">
<div class="abs vs" style="left:41px;top:1px;height:51px"></div>
<div class="abs vs" style="left:161px;top:1px;height:51px"></div>
<div class="abs vs" style="left:257px;top:1px;height:51px"></div>
<div class="abs vs" style="left:461px;top:1px;height:51px"></div>
<div class="abs vs" style="left:654px;top:1px;height:51px"></div>
<div class="abs vs" style="left:929px;top:1px;height:51px"></div>
<div class="abs cb" style="left:13px;top:19px"></div>
<svg class="abs ic" width="15" height="15" viewBox="0 0 15 15" style="left:49px;top:20px"><rect x="1" y="1" width="14" height="14" fill="#d9d2cc" opacity="0.700"/><rect x="0.500" y="0.500" width="13" height="13" rx="0.500" fill="url(#ginfo)" stroke="#0f5ea9"/><rect x="1.500" y="1.500" width="11" height="11" fill="none" stroke="#6fb6e4" stroke-opacity="0.600"/><rect x="6" y="6" width="2" height="5" fill="#fff"/><rect x="6" y="3" width="2" height="2" fill="#fff"/></svg>
<div class="abs gt" style="left:67.2px;top:19px;letter-spacing:0.154px">Informational</div>
<div class="abs gt" style="left:168.3px;top:20px;letter-spacing:0.234px">System</div>
<div class="abs gt" style="left:264.3px;top:20px;letter-spacing:0.035px">15 Dec 2016, 06:37:03.133 PM</div>
<div class="abs gt" style="left:468.8px;top:20px;letter-spacing:0.167px">0x400000c200000000</div>
<div class="abs gt" style="left:660.4px;top:5px;letter-spacing:0.209px">Remote Control session started by user</div>
<div class="abs gt" style="left:660.4px;top:20px;letter-spacing:0.250px">lichen13 in multiple-user mode has been</div>
<div class="abs gt" style="left:660.4px;top:35px;letter-spacing:0.272px">closed.</div>
</div>
<div class="abs row" style="top:341px;height:39px">
<div class="abs vs" style="left:41px;top:1px;height:37px"></div>
<div class="abs vs" style="left:161px;top:1px;height:37px"></div>
<div class="abs vs" style="left:257px;top:1px;height:37px"></div>
<div class="abs vs" style="left:461px;top:1px;height:37px"></div>
<div class="abs vs" style="left:654px;top:1px;height:37px"></div>
<div class="abs vs" style="left:929px;top:1px;height:37px"></div>
<div class="abs cb" style="left:13px;top:12px"></div>
<svg class="abs ic" width="15" height="15" viewBox="0 0 15 15" style="left:49px;top:12px"><rect x="1" y="1" width="14" height="14" fill="#d9d2cc" opacity="0.700"/><rect x="0.500" y="0.500" width="13" height="13" rx="0.500" fill="url(#ginfo)" stroke="#0f5ea9"/><rect x="1.500" y="1.500" width="11" height="11" fill="none" stroke="#6fb6e4" stroke-opacity="0.600"/><rect x="6" y="6" width="2" height="5" fill="#fff"/><rect x="6" y="3" width="2" height="2" fill="#fff"/></svg>
<div class="abs gt" style="left:67.2px;top:12px;letter-spacing:0.154px">Informational</div>
<div class="abs gt" style="left:168.3px;top:13px;letter-spacing:0.234px">System</div>
<div class="abs gt" style="left:264.3px;top:13px;letter-spacing:0.035px">15 Dec 2016, 06:36:58.909 PM</div>
<div class="abs gt" style="left:468.8px;top:13px;letter-spacing:0.179px">0x400000b300000000</div>
<div class="abs gt" style="left:660.4px;top:5px;letter-spacing:0.120px">The server was powered off by chassis control</div>
<div class="abs gt" style="left:660.4px;top:20px;letter-spacing:0.236px">command.</div>
</div>
<div class="abs" style="left:0;top:188px;width:42px;height:38px;border:1px dashed #1a1aa8"></div>
</div>
<div class="abs sbtrack" style="left:983px;top:63px;width:16px;height:380px"></div>
<div class="abs sbbtn" style="left:983px;top:63px;width:16px;height:16px"><div class="abs" style="left:3px;top:4px;border-left:4px solid transparent;border-right:4px solid transparent;border-bottom:4px solid #000"></div></div>
<div class="abs sbbtn" style="left:983px;top:252px;width:16px;height:200px"></div>
</div><!--/grid-->
</div>
<div class="abs" style="left:4px;top:89px;width:1046px;height:1px;background:#9d9b96"></div>
<div class="abs sbtrack" style="left:1034px;top:90px;width:16px;height:676px"></div>
<div class="abs sbbtn" style="left:1034px;top:90px;width:16px;height:16px"><div class="abs" style="left:3px;top:4px;border-left:4px solid transparent;border-right:4px solid transparent;border-bottom:4px solid #000"></div></div>
<div class="abs sbbtn" style="left:1034px;top:106px;width:16px;height:526px"></div>
<div class="abs sbbtn" style="left:1034px;top:750px;width:16px;height:16px"><div class="abs" style="left:3px;top:5px;border-left:4px solid transparent;border-right:4px solid transparent;border-top:4px solid #000"></div></div>
</body></html>
